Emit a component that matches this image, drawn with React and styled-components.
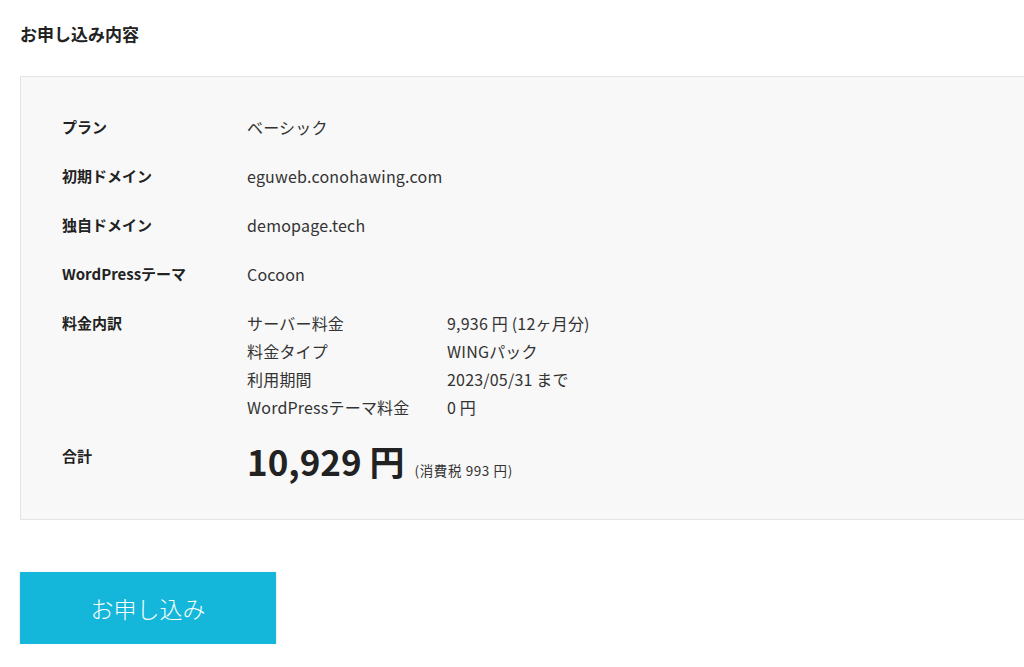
import React from "react";
import styled, { createGlobalStyle } from "styled-components";

const GlobalStyle = createGlobalStyle`
  html, body {
    margin: 0;
    padding: 0;
    background: #fff;
    overflow: hidden;
  }
  body {
    font-family: "Noto Sans CJK JP", "Noto Sans", sans-serif;
    color: #333;
  }
`;

const Page = styled.div`
  padding: 23px 0 0 20px;
  width: 1030px;
`;

const Title = styled.h2`
  margin: 0;
  font-size: 17px;
  font-weight: 700;
  line-height: 22px;
  color: #222;
`;

const Panel = styled.div`
  margin-top: 31px;
  background: #f8f8f8;
  border: 1px solid #e4e4e4;
  padding: 36px 41px 37px;
  display: flex;
  flex-direction: column;
  gap: 21px;
`;

const Row = styled.div`
  display: grid;
  grid-template-columns: 185px 1fr;
  align-items: start;
`;

const Label = styled.div`
  font-size: 15px;
  font-weight: 700;
  line-height: 28px;
  color: #222;
`;

const Value = styled.div`
  font-size: 16px;
  line-height: 28px;
  letter-spacing: 0.2px;
  color: #333;
`;

const Breakdown = styled.div`
  display: grid;
  grid-template-columns: 200px 1fr;
  font-size: 16px;
  line-height: 28px;
  letter-spacing: 0.2px;
  color: #333;
`;

const Total = styled.div`
  height: 40px;
  line-height: 38px;
  white-space: nowrap;
`;

const Amount = styled.span`
  font-size: 35px;
  font-weight: 700;
  line-height: 38px;
  color: #222;
  margin-right: 10px;
`;

const Tax = styled.span`
  font-size: 13.5px;
  letter-spacing: 0.6px;
  line-height: 38px;
  color: #333;
`;

const SubmitButton = styled.button`
  display: block;
  margin-top: 52px;
  width: 256px;
  height: 72px;
  border: none;
  background: #14b7d9;
  color: #fff;
  font-family: "Noto Sans CJK JP", sans-serif;
  font-size: 23px;
  font-weight: 300;
  box-shadow: 0 1px 3px rgba(0, 0, 0, 0.15);
  cursor: pointer;
`;

const rows = [
  ["プラン", "ベーシック"],
  ["初期ドメイン", "eguweb.conohawing.com"],
  ["独自ドメイン", "demopage.tech"],
  ["WordPressテーマ", "Cocoon"],
];

const breakdown = [
  ["サーバー料金", "9,936 円 (12ヶ月分)"],
  ["料金タイプ", "WINGパック"],
  ["利用期間", "2023/05/31 まで"],
  ["WordPressテーマ料金", "0 円"],
];

export default function App() {
  return (
    <>
      <GlobalStyle />
      <Page>
        <Title>お申し込み内容</Title>
        <Panel>
          {rows.map(([k, v]) => (
            <Row key={k}>
              <Label>{k}</Label>
              <Value>{v}</Value>
            </Row>
          ))}
          <Row>
            <Label>料金内訳</Label>
            <Breakdown>
              {breakdown.map(([k, v]) => (
                <React.Fragment key={k}>
                  <span>{k}</span>
                  <span>{v}</span>
                </React.Fragment>
              ))}
            </Breakdown>
          </Row>
          <Row>
            <Label>合計</Label>
            <Total>
              <Amount>10,929 円</Amount>
              <Tax>(消費税 993 円)</Tax>
            </Total>
          </Row>
        </Panel>
        <SubmitButton>お申し込み</SubmitButton>
      </Page>
    </>
  );
}
